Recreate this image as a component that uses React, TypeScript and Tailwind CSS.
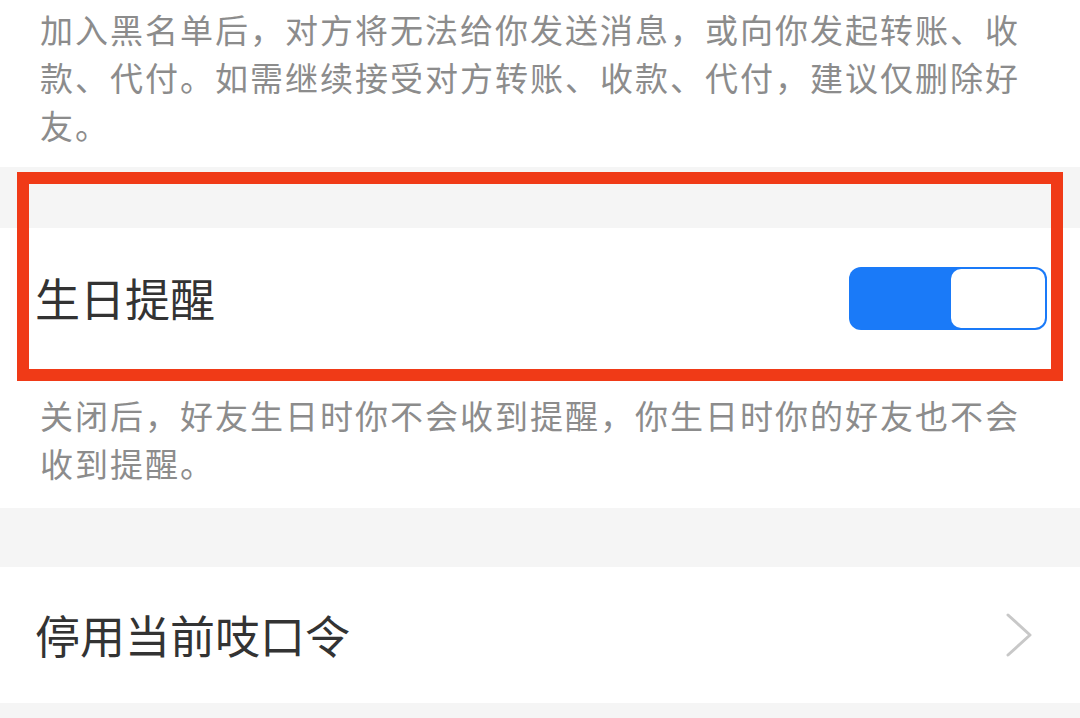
import React from 'react';

const font = { fontFamily: '"Noto Sans CJK SC", "Noto Sans", sans-serif' };

function Toggle({ on }: { on: boolean }) {
    return (
        <div className={`w-[198px] h-[63px] rounded-[12px] p-[2px] flex ${on ? 'bg-[#1a7af8] justify-end' : 'bg-[#e5e5e5] justify-start'}`}>
            <div className="w-[94px] h-full rounded-[10px] bg-white" />
        </div>
    );
}

function Chevron() {
    return (
        <svg width="28" height="44" viewBox="0 0 28 44" fill="none">
            <path d="M3 2 L25 22 L3 42" stroke="#c8c8c8" strokeWidth="3" strokeLinecap="round" strokeLinejoin="round" />
        </svg>
    );
}

export default function App() {
    return (
        <div className="relative w-[1080px] h-[718px] overflow-hidden bg-[#f5f5f5]" style={font}>
            {/* 黑名单说明 */}
            <div className="bg-white pt-[5px] pb-[18px] pl-[40px] pr-[20px]">
                <p className="w-[1010px] text-[33px] leading-[48px] tracking-[2px] text-[#8c8c8c]">
                    加入黑名单后，对方将无法给你发送消息，或向你发起转账、收款、代付。如需继续接受对方转账、收款、代付，建议仅删除好友。
                </p>
            </div>

            <div className="h-[61px]" />

            {/* 生日提醒 */}
            <div className="bg-white h-[140px] flex items-center justify-between pl-[35px] pr-[33px]">
                <span className="text-[45px] text-[#333333]">生日提醒</span>
                <Toggle on />
            </div>
            <div className="bg-white pt-[23px] pb-[21px] pl-[40px] pr-[20px]">
                <p className="w-[1010px] text-[33px] leading-[48px] tracking-[2px] text-[#8c8c8c]">
                    关闭后，好友生日时你不会收到提醒，你生日时你的好友也不会收到提醒。
                </p>
            </div>

            <div className="h-[59px]" />

            {/* 停用当前吱口令 */}
            <div className="bg-white h-[136px] flex items-center justify-between pl-[35px] pr-[47px]">
                <span className="text-[45px] text-[#333333]">停用当前吱口令</span>
                <Chevron />
            </div>

            {/* 标注框 */}
            <div className="absolute left-[17px] top-[172px] w-[1046px] h-[209px] border-[12px] border-[#f03a17] pointer-events-none" />
        </div>
    );
}
